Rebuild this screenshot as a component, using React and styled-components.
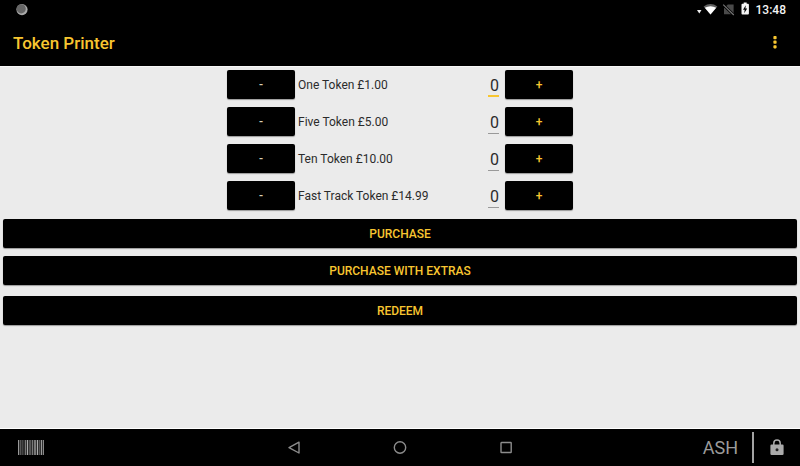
import React, { useState } from 'react';
import styled, { createGlobalStyle } from 'styled-components';

const GlobalStyle = createGlobalStyle`
  * {
    box-sizing: border-box;
  }
  body {
    margin: 0;
    background: #ebebeb;
    font-family: Roboto, 'Noto Sans', sans-serif;
  }
  button, input {
    font-family: inherit;
  }
`;

const accent = '#f8c630';

const Page = styled.div`
  min-height: 100vh;
  display: flex;
  flex-direction: column;
`;
const StatusBar = styled.div`
  height: 20px;
  padding: 0 14px 0 16px;
  display: flex;
  align-items: center;
  justify-content: space-between;
  background: #000;
`;
const StatusIcons = styled.div`
  display: flex;
  align-items: center;
`;
const Clock = styled.time`
  margin-left: 6px;
  color: #f4f4f4;
  font-size: 12px;
  font-weight: 500;
  line-height: 20px;
`;
const AppBar = styled.header`
  height: 46px;
  padding: 0 16px 0 13px;
  display: flex;
  align-items: center;
  justify-content: space-between;
  background: #000;
`;
const Title = styled.h1`
  margin: 0;
  color: ${accent};
  font-size: 17px;
  font-weight: 500;
  line-height: 20px;
`;
const IconButton = styled.button`
  padding: 0;
  border: 0;
  display: flex;
  background: none;
`;
const Content = styled.main`
  flex: 1;
  padding: 3px;
  border-top: 1px solid #f8f8f8;
  border-bottom: 1px solid #fff;
  background: #ebebeb;
`;
const TokenList = styled.div`
  width: 346px;
  max-width: 100%;
  margin: 0 auto 9px;
  display: flex;
  flex-direction: column;
  gap: 8px;
`;
const TokenRow = styled.div`
  display: flex;
  align-items: center;
`;
const TokenLabel = styled.label`
  flex: 1;
  padding-left: 3px;
  color: #2b2b2b;
  font-size: 12px;
  line-height: 16px;
`;
const Quantity = styled.input`
  width: 11px;
  height: 25px;
  margin-right: 6px;
  padding: 2px 0 0;
  border: 0;
  border-bottom: 1px solid #999;
  border-radius: 0;
  outline: 0;
  background: none;
  color: #2b2b2b;
  font-size: 16px;
  text-align: right;

  &[data-active='true'] {
    padding-top: 3px;
    border-bottom: 2px solid ${accent};
  }
`;
const Button = styled.button`
  height: 29px;
  padding: 0;
  border: 0;
  border-radius: 2px;
  background: #000;
  box-shadow: 0 1px 1px rgba(0, 0, 0, 0.35);
  color: ${props => (props.$muted ? '#d8cfb4' : accent)};
  font-size: 12px;
  font-weight: 500;
  line-height: 16px;
`;
const StepButton = styled(Button)`
  width: 68px;
`;
const Actions = styled.div`
  display: flex;
  flex-direction: column;
  gap: 8px;
`;
const RedeemBox = styled.div`
  padding-top: 3px;
  display: grid;
`;
const NavBar = styled.footer`
  height: 37px;
  padding: 0 15px 0 18px;
  display: grid;
  grid-template-columns: 1fr auto 1fr;
  align-items: center;
  background: #000;
`;
const NavButtons = styled.nav`
  margin-left: -3px;
  display: flex;
  gap: 92px;
`;
const NavEnd = styled.div`
  display: flex;
  align-items: center;
  justify-content: flex-end;
`;
const User = styled.span`
  color: #9b9b9b;
  font-size: 18px;
  line-height: 20px;
`;
const Divider = styled.span`
  width: 2px;
  height: 31px;
  margin: 0 16px 0 14px;
  background: #a3a3a3;
`;

const tokens = [
  { id: 'one', label: 'One Token £1.00' },
  { id: 'five', label: 'Five Token £5.00' },
  { id: 'ten', label: 'Ten Token £10.00' },
  { id: 'fast', label: 'Fast Track Token £14.99' },
];

// x, width and grey of each barcode line
const bars = [
  [0, 1, '#999'], [2, 1, '#555'], [4, 1, '#444'], [7, 1, '#777'], [9, 1, '#aaa'],
  [11, 2, '#555'], [14, 1, '#777'], [16, 2, '#777'], [19, 1, '#aaa'],
  [21, 1, '#555'], [23, 1, '#999'], [25, 1, '#888'],
];

const StatusArea = () => (
  <StatusIcons>
    <svg width="54" height="20" viewBox="0 0 54 20">
      <path d="M1 10h4.5l-2.2 3.6z" fill="#eee" />
      <path d="M7.6 6.4q6.9-4.8 13.8 0L14.5 14.6z" fill="#606060" />
      <path d="M8.8 7.8q5.7-3 11.4 0L14.5 14.6z" fill="#fff" />
      <path d="M28 8.2L31.8 4.6H37.6v9.6H28z" fill="#4a4a4a" />
      <path d="M27.2 4.7L37.8 15" stroke="#000" strokeWidth="2.6" />
      <path d="M27.2 4.7L37.8 15" stroke="#777" strokeWidth="1.1" />
      <path d="M47.7 3.8V2.6h3v1.2H52q.9 0 .9.9v8.8q0 .9-.9.9h-5.6q-.9 0-.9-.9V4.7q0-.9.9-.9z" fill="#f4f4f4" />
      <path d="M49.8 5.2L47 9.8h1.7l-.5 3.4 3-4.6h-1.8z" fill="#000" />
    </svg>
    <Clock>13:48</Clock>
  </StatusIcons>
);

export default () => {
  const [counts, setCounts] = useState({ one: 0, five: 0, ten: 0, fast: 0 });
  const [active, setActive] = useState('one');

  const change = (id, value) => {
    setCounts({ ...counts, [id]: Math.max(0, Number(value) || 0) });
    setActive(id);
  };

  return (
    <Page>
      <GlobalStyle />
      <StatusBar>
        <svg width="12" height="12" viewBox="0 0 12 12">
          <circle cx="6" cy="5.6" r="5.6" fill="#a9a9a9" />
          <circle cx="5.2" cy="4.8" r="4.6" fill="#666" />
        </svg>
        <StatusArea />
      </StatusBar>
      <AppBar>
        <Title>Token Printer</Title>
        <IconButton aria-label="More options">
          <svg width="18" height="18" viewBox="0 0 18 18" fill={accent}>
            <rect x="7.4" y="2" width="3.2" height="3.2" rx="0.8" />
            <rect x="7.4" y="6.6" width="3.2" height="3.2" rx="0.8" />
            <rect x="7.4" y="11.2" width="3.2" height="3.2" rx="0.8" />
          </svg>
        </IconButton>
      </AppBar>
      <Content>
        <TokenList>
          {tokens.map(({ id, label }) => (
            <TokenRow key={id}>
              <StepButton $muted onClick={() => change(id, counts[id] - 1)}>
                -
              </StepButton>
              <TokenLabel htmlFor={id}>{label}</TokenLabel>
              <Quantity
                id={id}
                data-active={active === id}
                value={counts[id]}
                onFocus={() => setActive(id)}
                onChange={e => change(id, e.target.value)}
              />
              <StepButton onClick={() => change(id, counts[id] + 1)}>+</StepButton>
            </TokenRow>
          ))}
        </TokenList>
        <Actions>
          <Button>PURCHASE</Button>
          <Button>PURCHASE WITH EXTRAS</Button>
          <RedeemBox>
            <Button>REDEEM</Button>
          </RedeemBox>
        </Actions>
      </Content>
      <NavBar>
        <svg width="26" height="15" viewBox="0 0 26 15">
          <rect width="26" height="15" fill="#2e2e2e" />
          {bars.map(([x, width, fill]) => (
            <rect key={x} x={x} width={width} height="15" fill={fill} />
          ))}
        </svg>
        <NavButtons>
          <IconButton aria-label="Back">
            <svg width="14" height="14" viewBox="0 0 14 14" fill="none" stroke="#8c8c8c" strokeWidth="1.4">
              <path d="M12 1.2v10.8L2 6.6z" strokeLinejoin="round" />
            </svg>
          </IconButton>
          <IconButton aria-label="Home">
            <svg width="14" height="14" viewBox="0 0 14 14" fill="none" stroke="#8c8c8c" strokeWidth="1.4">
              <circle cx="7" cy="6.5" r="5.7" />
            </svg>
          </IconButton>
          <IconButton aria-label="Recent apps">
            <svg width="14" height="14" viewBox="0 0 14 14" fill="none" stroke="#8c8c8c" strokeWidth="1.4">
              <rect x="2" y="1.5" width="10.2" height="10" rx="0.5" />
            </svg>
          </IconButton>
        </NavButtons>
        <NavEnd>
          <User>ASH</User>
          <Divider />
          <IconButton aria-label="Lock">
            <svg width="15" height="18" viewBox="0 0 15 18">
              <path d="M3.8 6.4V4.2a3.2 3.2 0 0 1 6.4 0v2.2" fill="none" stroke="#aaa" strokeWidth="1.5" />
              <rect x="0.4" y="5.6" width="13.2" height="10.4" rx="1.2" fill="#aaa" />
              <circle cx="7" cy="10.8" r="1.5" fill="#222" />
            </svg>
          </IconButton>
        </NavEnd>
      </NavBar>
    </Page>
  );
};
